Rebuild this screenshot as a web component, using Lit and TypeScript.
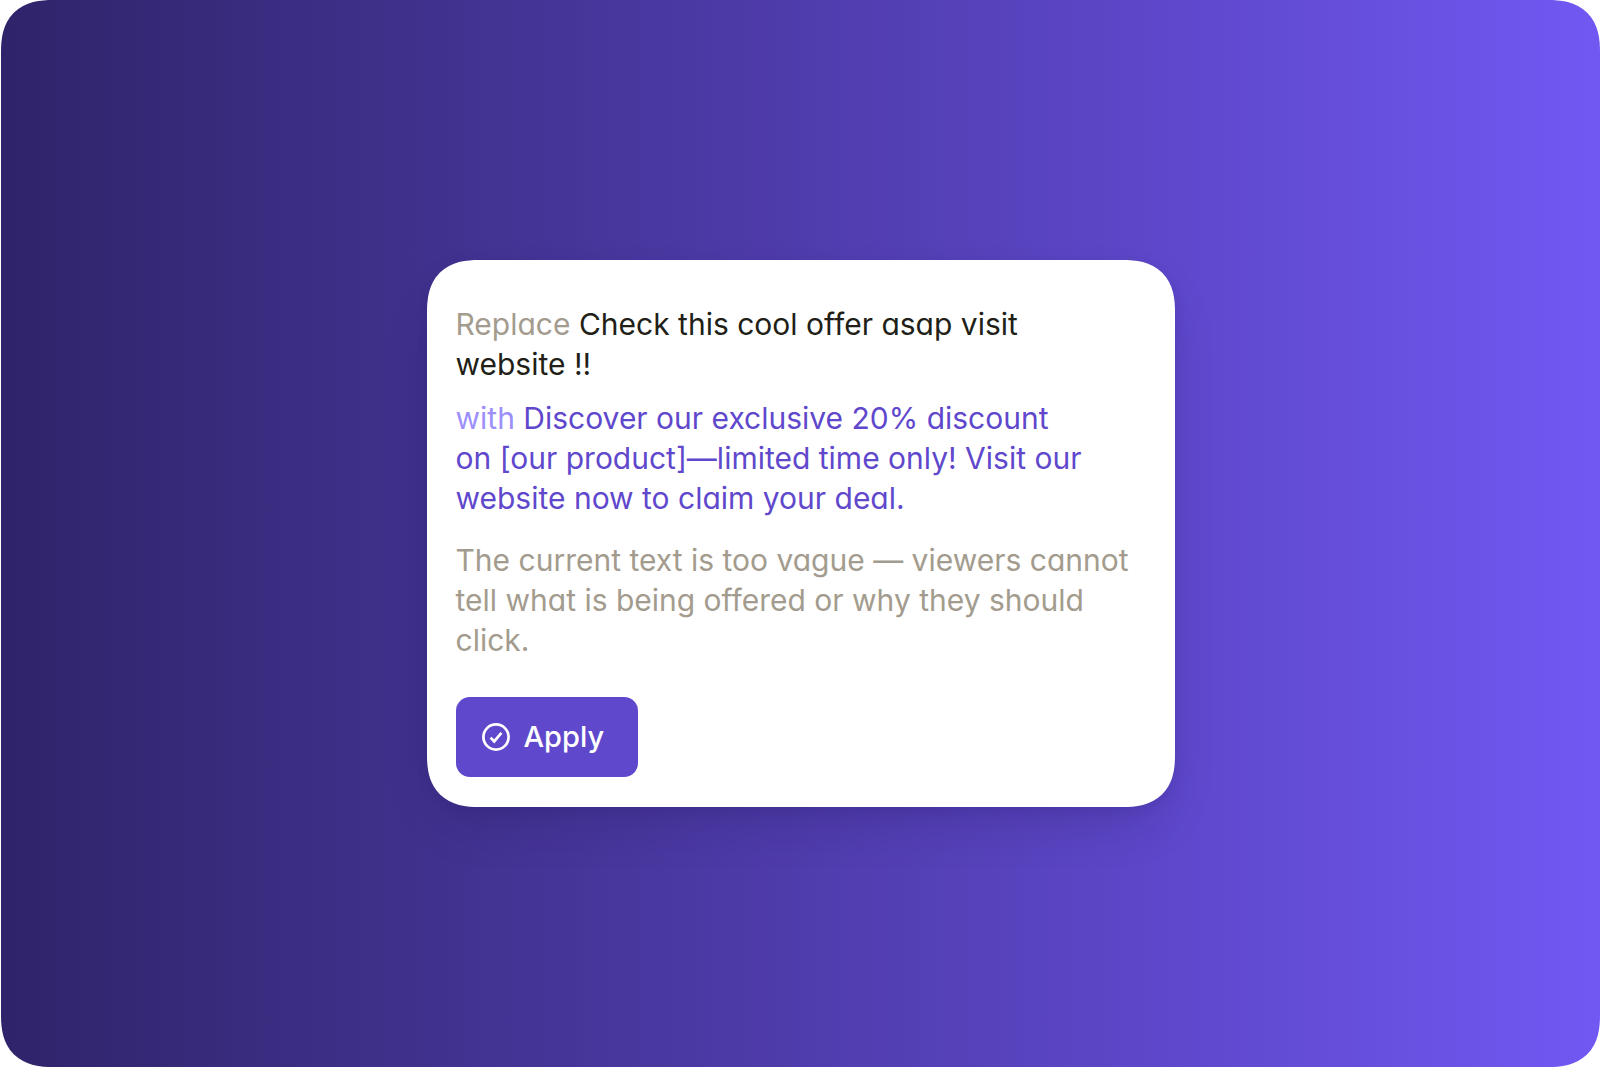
import { LitElement, html, css } from "lit";
import { customElement, property } from "lit/decorators.js";

@customElement("suggestion-card")
class SuggestionCard extends LitElement {
  @property() original = "";
  @property() replacement = "";
  @property() reason = "";

  static styles = css`
    :host {
      display: block;
      box-sizing: border-box;
      width: 100%;
      max-width: 748px;
    }
    .card {
      display: flex;
      flex-direction: column;
      align-items: flex-start;
      padding: 44px 29px 30px;
      border-radius: 44px;
      background: #fff;
      box-shadow: 0 24px 48px -8px rgba(30, 18, 80, 0.2), 0 4px 12px rgba(30, 18, 80, 0.08);
    }
    @supports (corner-shape: superellipse(1.3)) {
      .card {
        border-radius: 52px;
        corner-shape: superellipse(1.3);
      }
    }
    p {
      margin: 0;
    }
    .original {
      color: #211f17;
    }
    .replacement {
      margin-top: 14px;
      color: #5f48cc;
    }
    .original .label,
    .reason {
      color: #a39c8e;
    }
    .replacement .label {
      color: #9c90fb;
    }
    .reason {
      margin-top: 22px;
    }
    .apply {
      display: flex;
      align-items: center;
      gap: 13px;
      margin-top: 37px;
      height: 80px;
      padding: 0 34px 0 25px;
      border: 0;
      border-radius: 14px;
      background: #5f48cc;
      color: #fff;
      font: inherit;
      font-weight: 500;
      font-size: 29px;
      font-feature-settings: inherit;
      cursor: pointer;
    }
    .icon {
      width: 30px;
      height: 30px;
      fill: none;
      stroke: currentColor;
      stroke-width: 2.7;
    }
  `;

  render() {
    return html`
      <article class="card">
        <p class="original"><span class="label">Replace</span> ${this.original}</p>
        <p class="replacement"><span class="label">with</span> ${this.replacement}</p>
        <p class="reason">${this.reason}</p>
        <button class="apply" type="button">
          <svg class="icon" viewBox="0 0 30 30" aria-hidden="true">
            <circle cx="15" cy="15" r="12.6" />
            <path d="M9.6 15.6 13.2 19.4 20.4 10.8" />
          </svg>
          Apply
        </button>
      </article>
    `;
  }
}

@customElement("app-root")
class AppRoot extends LitElement {
  static styles = css`
    :host {
      display: block;
      box-sizing: border-box;
      min-height: 100vh;
      padding: 0 1px;
      background: #fff;
      font: 400 30px/40px Inter, "Liberation Sans", sans-serif;
      font-feature-settings: "cv11";
    }
    .stage {
      display: flex;
      align-items: center;
      justify-content: center;
      box-sizing: border-box;
      min-height: 100vh;
      padding: 24px;
      border-radius: 44px;
      background: linear-gradient(90deg, #2f246a 0%, #5f48cc 74%, #7158f3 100%);
    }
    @supports (corner-shape: superellipse(1.3)) {
      .stage {
        border-radius: 52px;
        corner-shape: superellipse(1.3);
      }
    }
  `;

  render() {
    return html`
      <main class="stage">
        <suggestion-card
          original="Check this cool offer asap visit website&nbsp;!!"
          replacement="Discover our exclusive 20% discount on&nbsp;[our&nbsp;product]—limited time only! Visit our website now to claim your deal."
          reason="The current text is too vague — viewers cannot tell what is being offered or why they should click."
        ></suggestion-card>
      </main>
    `;
  }
}
